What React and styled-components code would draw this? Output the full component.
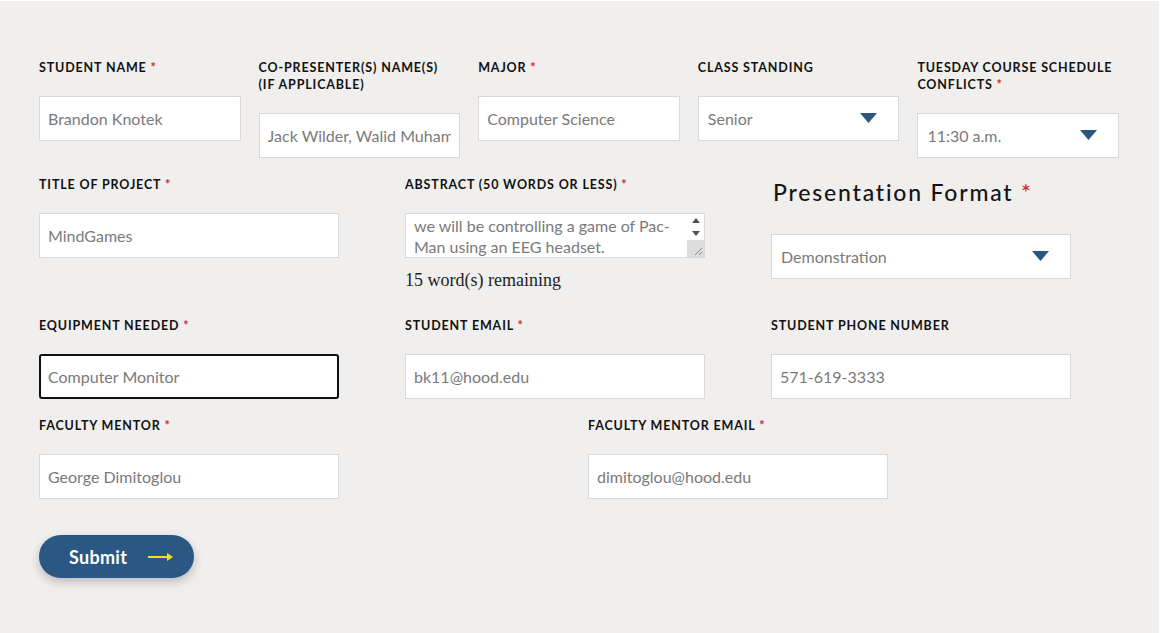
import React, { useEffect, useRef } from 'react';
import styled, { createGlobalStyle } from 'styled-components';

const ABSTRACT =
  'MindGames is a brain-computer interface project that reads and interprets the electrical activity of the human brain in real time. For our demonstration,\nwe will be controlling a game of Pac-Man using an EEG headset.';

const GlobalStyle = createGlobalStyle`
  html, body {
    margin: 0;
    padding: 0;
    background: #f0efed;
  }
  * {
    box-sizing: border-box;
  }
`;

const Arrow = () => (
  <svg width="26" height="10" viewBox="0 0 26 10">
    <path d="M0 5 H21" stroke="#f7e017" strokeWidth="2" />
    <path d="M19 1 L25 5 L19 9 Z" fill="#f7e017" />
  </svg>
);

const Caret = () => (
  <svg width="17" height="10" viewBox="0 0 17 10">
    <path d="M0 0 H17 L8.5 10 Z" fill="#2b5681" />
  </svg>
);

const ScrollUp = () => (
  <svg width="8" height="5" viewBox="0 0 8 5">
    <path d="M0 5 L4 0 L8 5 Z" fill="#505050" />
  </svg>
);

const ScrollDown = () => (
  <svg width="8" height="5" viewBox="0 0 8 5">
    <path d="M0 0 L8 0 L4 5 Z" fill="#505050" />
  </svg>
);

const Grip = () => (
  <svg width="17" height="17" viewBox="0 0 17 17">
    <path d="M15 8 L8 15 M15 12 L12 15" stroke="#8a8a8a" strokeWidth="1" />
  </svg>
);

function Field({ label, required, children, pad }) {
  return (
    <FieldBox $pad={pad}>
      <Label>
        {label}
        {required && <Star> *</Star>}
      </Label>
      {children}
    </FieldBox>
  );
}

function Select({ value, width }) {
  return (
    <SelectBox $width={width}>
      <span>{value}</span>
      <Caret />
    </SelectBox>
  );
}

function Abstract({ value }) {
  const areaRef = useRef(null);

  useEffect(() => {
    if (areaRef.current) {
      areaRef.current.scrollTop = areaRef.current.scrollHeight;
    }
  }, []);

  return (
    <AreaWrap>
      <TextArea ref={areaRef} readOnly value={value} />
      <ScrollRail>
        <ScrollButton>
          <ScrollUp />
        </ScrollButton>
        <ScrollButton>
          <ScrollDown />
        </ScrollButton>
        <Resizer>
          <Grip />
        </Resizer>
      </ScrollRail>
    </AreaWrap>
  );
}

// the equipment field is the one being edited, caret after "Computer "
function FocusedInput({ value, at }) {
  const ref = useRef(null);

  useEffect(() => {
    if (ref.current) {
      ref.current.focus();
      ref.current.setSelectionRange(at, at);
    }
  }, [at]);

  return <Input ref={ref} $width={300} $focused defaultValue={value} />;
}

export default function App() {
  return (
    <Page>
      <GlobalStyle />
      <Form onSubmit={(e) => e.preventDefault()}>
        <Row $cols={5}>
          <Field label="Student Name" required pad>
            <Input readOnly value="Brandon Knotek" />
          </Field>
          <Field
            label={
              <>
                Co-Presenter(s) Name(s)
                <br />
                (if applicable)
              </>
            }
            pad
          >
            <Input readOnly value="Jack Wilder, Walid Muhammad" />
          </Field>
          <Field label="Major" required pad>
            <Input readOnly value="Computer Science" />
          </Field>
          <Field label="Class Standing" pad>
            <Select value="Senior" />
          </Field>
          <Field label="Tuesday Course Schedule Conflicts" required pad>
            <Select value="11:30 a.m." />
          </Field>
        </Row>

        <Row $cols={3}>
          <Field label="Title of Project" required>
            <Input $width={300} readOnly value="MindGames" />
          </Field>
          <Field label="Abstract (50 words or less)" required>
            <Abstract value={ABSTRACT} />
            <Counter>15 word(s) remaining</Counter>
          </Field>
          <FieldBox>
            <Legend>
              Presentation Format<Star> *</Star>
            </Legend>
            <Select value="Demonstration" width={300} />
          </FieldBox>
        </Row>

        <Row $cols={3}>
          <Field label="Equipment Needed" required>
            <FocusedInput value="Computer Monitor" at={9} />
          </Field>
          <Field label="Student Email" required>
            <Input $width={300} readOnly value="bk11@hood.edu" />
          </Field>
          <Field label="Student Phone Number">
            <Input $width={300} readOnly value="571-619-3333" />
          </Field>
        </Row>

        <Row $cols={2}>
          <Field label="Faculty Mentor" required>
            <Input $width={300} readOnly value="George Dimitoglou" />
          </Field>
          <Field label="Faculty Mentor Email" required>
            <Input $width={300} readOnly value="dimitoglou@hood.edu" />
          </Field>
        </Row>

        <SubmitButton type="submit">
          Submit
          <Arrow />
        </SubmitButton>
      </Form>
    </Page>
  );
}

const Page = styled.div`
  width: 1160px;
  height: 633px;
  border-top: 1px solid #fff;
  border-right: 1px solid #fff;
  padding: 57px 0 0 39px;
  font-family: Lato, 'Open Sans', sans-serif;
`;

const Form = styled.form`
  width: 1098px;
  display: flex;
  flex-direction: column;
`;

const Row = styled.div`
  display: grid;
  grid-template-columns: repeat(${(p) => p.$cols}, 1fr);
  align-items: start;
  margin-bottom: 17px;
`;

const FieldBox = styled.div`
  display: flex;
  flex-direction: column;
  align-items: flex-start;
  padding-right: ${(p) => (p.$pad ? '18px' : '0')};
`;

const Label = styled.label`
  display: block;
  font-family: Lato, sans-serif;
  font-weight: 700;
  font-size: 12.5px;
  line-height: 17px;
  letter-spacing: 0.85px;
  text-transform: uppercase;
  color: #121212;
  margin-bottom: 20px;
  padding-top: 1px;
`;

const Star = styled.span`
  color: #d2262b;
`;

const Legend = styled.div`
  font-family: Lato, sans-serif;
  font-weight: 500;
  font-size: 23px;
  line-height: 32px;
  letter-spacing: 1.8px;
  color: #151515;
  padding: 1px 0 0 2px;
  margin-bottom: 26px;
`;

const Input = styled.input`
  display: block;
  width: ${(p) => (p.$width ? `${p.$width}px` : '100%')};
  height: 45px;
  padding: 0 8px;
  background: #fff;
  border: ${(p) => (p.$focused ? '2px solid #111' : '1px solid #d9d9d9')};
  border-radius: ${(p) => (p.$focused ? '3px' : '0')};
  font-family: Lato, sans-serif;
  font-size: 16px;
  color: #7a7a7a;
  caret-color: #333;
  outline: none;
  padding-left: ${(p) => (p.$focused ? '7px' : '8px')};
`;

const SelectBox = styled.div`
  display: flex;
  align-items: center;
  justify-content: space-between;
  width: ${(p) => (p.$width ? `${p.$width}px` : '100%')};
  height: 45px;
  padding: 0 21px 0 9px;
  background: #fff;
  border: 1px solid #d9d9d9;
  font-family: Lato, sans-serif;
  font-size: 16px;
  color: #7a7a7a;
  svg {
    margin-top: -2px;
  }
`;

const AreaWrap = styled.div`
  display: flex;
  width: 300px;
  height: 45px;
  background: #fff;
  border: 1px solid #d9d9d9;
`;

const TextArea = styled.textarea`
  flex: 1;
  min-width: 0;
  height: 100%;
  padding: 2px 8px 0;
  background: #fff;
  border: none;
  font-family: Lato, sans-serif;
  font-size: 16px;
  line-height: 21px;
  color: #7a7a7a;
  resize: none;
  outline: none;
  overflow: hidden;
`;

const ScrollRail = styled.div`
  width: 17px;
  display: flex;
  flex-direction: column;
  background: #fff;
`;

const ScrollButton = styled.div`
  height: 13px;
  display: flex;
  align-items: center;
  justify-content: center;
`;

const Resizer = styled.div`
  flex: 1;
  background: #dcdcdc;
  display: flex;
  align-items: flex-end;
  justify-content: flex-end;
`;

const Counter = styled.div`
  font-family: 'Liberation Serif', Georgia, serif;
  font-size: 18px;
  line-height: 22px;
  color: #222;
  margin-top: 11px;
  margin-bottom: 8px;
`;

const SubmitButton = styled.button`
  display: flex;
  align-items: center;
  gap: 21px;
  align-self: flex-start;
  margin-top: 19px;
  height: 43px;
  padding: 0 20px 0 30px;
  border: none;
  border-radius: 22px;
  background: #2b5882;
  color: #fff;
  font-family: Lato, sans-serif;
  font-weight: 700;
  font-size: 18px;
  letter-spacing: 0.3px;
  box-shadow: 0 4px 10px rgba(0, 0, 0, 0.22);
  cursor: pointer;
`;
